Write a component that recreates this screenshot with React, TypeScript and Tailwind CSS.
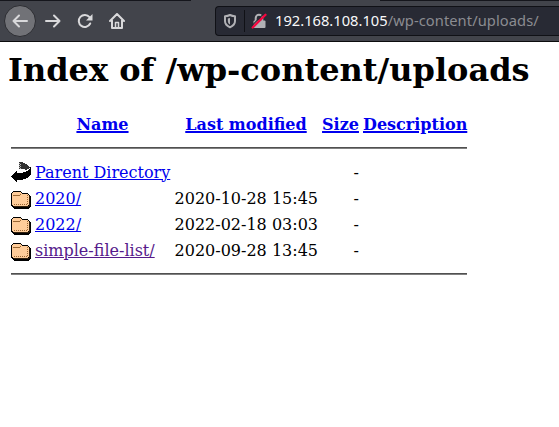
import React from "react";

type Entry = { name: string; modified: string; icon: "back" | "folder"; visited?: boolean };

const entries: Entry[] = [
  { name: "Parent Directory", modified: "", icon: "back" },
  { name: "2020/", modified: "2020-10-28 15:45", icon: "folder" },
  { name: "2022/", modified: "2022-02-18 03:03", icon: "folder" },
  { name: "simple-file-list/", modified: "2020-09-28 13:45", icon: "folder", visited: true },
];

function FolderIcon() {
  return (
    <svg width="20" height="22" viewBox="0 0 20 22" shapeRendering="crispEdges" className="block">
      <path d="M2 4h8v1h1v1h6v1h1v1h1v1h1v11h-1v1h-1v1H3v-1H2v-1H1v-1H0V6h1V5h1z" fill="#000" />
      <path d="M2 5h8v1h1v1h6v1h1v10h-1v1H2v-1H1V6h1z" fill="#ffcc99" />
      <path d="M2 8h7v1H2zM9 7h1v1H9z" fill="#996633" />
      <path d="M3 17h1v1H3zM5 17h1v1H5zM7 17h1v1H7zM9 17h1v1H9zM11 17h1v1h-1zM13 17h1v1h-1zM15 17h1v1h-1zM16 8h1v1h-1zM16 10h1v1h-1zM16 12h1v1h-1zM16 14h1v1h-1zM16 16h1v1h-1z" fill="#996633" />
      <path d="M18 9h1v10h-1v1H3v-1h15z" fill="#33200c" />
    </svg>
  );
}

function BackIcon() {
  return (
    <svg width="20" height="22" viewBox="0 0 20 22" shapeRendering="crispEdges" className="block">
      <path d="M8 1h4v1h2v1h2v1h1v1h1v1h1v1h-1v1h-2v1h-2V8H8z" fill="#333" />
      <path d="M8 2h1v1H8zM9 3h1v1H9zM8 4h1v1H8zM9 5h1v1H9zM8 6h1v1H8zM9 7h1v1H9z" fill="#bbb" />
      <path d="M19 6h1v8h-1v1h-1v1h-1v1h-2v1h-3v1H6v2H5v-1H4v-1H3v-1H2v-1H1v-1H0v-1h1v-1h1v-1h1v-1h1v-1h1v-1h1v2h6v-1h3v-1h2V9h1V8h1z" fill="#000" />
    </svg>
  );
}

function Toolbar() {
  return (
    <div className="relative flex h-[42px] items-center border-b border-[#0c0c0d] bg-[#42444b] text-[#d9d9db]">
      <div className="absolute left-0 top-0 h-px w-[191px] bg-[#15161c]" />
      <div className="absolute right-0 top-0 h-px w-[179px] bg-[#15161c]" />
      <div className="ml-1 flex h-8 w-8 shrink-0 items-center justify-center rounded-full border border-[#2c2d32] bg-[#717277]">
        <svg width="16" height="16" viewBox="0 0 16 16" fill="none" stroke="currentColor" strokeWidth="2" strokeLinecap="round" strokeLinejoin="round">
          <path d="M15 8H1.5M7 2.5L1.5 8L7 13.5" />
        </svg>
      </div>
      <svg className="ml-[9px] shrink-0" width="16" height="16" viewBox="0 0 16 16" fill="none" stroke="currentColor" strokeWidth="2" strokeLinecap="round" strokeLinejoin="round">
        <path d="M1 8h13.5M9 2.5L14.5 8L9 13.5" />
      </svg>
      <svg className="ml-4 shrink-0" width="16" height="16" viewBox="0 0 16 16" fill="none" stroke="currentColor" strokeWidth="2" strokeLinecap="round" strokeLinejoin="round">
        <path d="M13.2 10.5A6 6 0 1 1 12.5 4.2" />
        <path d="M15.500 1v6.500H9z" fill="currentColor" stroke="none" />
      </svg>
      <svg className="ml-4 shrink-0" width="16" height="16" viewBox="0 0 16 16" fill="none" stroke="currentColor" strokeWidth="2" strokeLinecap="round" strokeLinejoin="round">
        <path d="M1 8L8 1L15 8M3 7.500V15h10V7.500" />
        <path d="M6.500 15V9.500h3V15" strokeWidth="1.500" />
      </svg>
      <div className="ml-[90px] flex h-[30px] flex-1 items-center rounded-l border border-r-0 border-[#101116] bg-[#282a34]">
        <svg className="ml-[7px] shrink-0" width="14" height="16" viewBox="0 0 14 16" fill="none" stroke="#b1b1b5" strokeWidth="2" strokeLinejoin="round">
          <path d="M7 2C5 3 3.500 3.200 2 3.200V8c0 3.200 2 5 5 6.300C10 13 12 11.200 12 8V3.200C10.500 3.200 9 3 7 2z" />
          <path d="M7 5L4.800 5.500V8c0 1.600.7 2.700 2.200 3.600z" fill="#b1b1b5" stroke="none" />
        </svg>
        <div className="ml-[7px] h-[22px] w-px bg-[#101116]" />
        <svg className="ml-[6px] shrink-0" width="16" height="16" viewBox="0 0 16 16">
          <path d="M4.700 8V5a3.300 3.300 0 0 1 6.600 0v3" fill="none" stroke="#b1b1b5" strokeWidth="2" />
          <rect x="2.500" y="7.500" width="12" height="7.500" rx="1" fill="#b1b1b5" />
          <path d="M0 13.500L13 .500" stroke="#282a34" strokeWidth="1.200" />
          <path d="M1.700 14.500L14.500 1.700" stroke="#f5063f" strokeWidth="2.300" strokeLinecap="round" />
        </svg>
        <span className="-mt-px ml-2 whitespace-nowrap font-['Noto_Sans',sans-serif] text-[14.7px] leading-5 text-[#f9f9fa]">
          192.168.108.105<span className="tracking-[0.07px] text-[#8b8c91]">/wp-content/uploads/</span>
        </span>
      </div>
    </div>
  );
}

const rule = "my-2 h-[2px] border-0 border-t border-t-[#505050] bg-[#808080]";

export default function App() {
  return (
    <div className="h-[427px] w-[559px] overflow-hidden bg-white font-['DejaVu_Serif',serif] text-base leading-[19px] text-black">
      <Toolbar />
      <main className="px-2 pt-[9px]">
        <h1 className="whitespace-nowrap text-[32px] font-bold leading-[38px]">Index of /wp-content/uploads</h1>
        <table className="mt-[23px] w-[462px] table-fixed border-separate border-spacing-[2px] [&_td]:p-px [&_th]:px-px [&_th]:pt-px [&_th]:pb-[2px]">
          <colgroup>
            <col className="w-[22px]" />
            <col className="w-[137px]" />
            <col className="w-[146px]" />
            <col className="w-[39px]" />
            <col className="w-[106px]" />
          </colgroup>
          <tbody>
            <tr className="text-center font-bold text-[#0000ee]">
              <th />
              {["Name", "Last modified", "Size", "Description"].map((label) => (
                <th key={label} className="whitespace-nowrap">
                  <a className="underline decoration-2">{label}</a>
                </th>
              ))}
            </tr>
            <tr>
              <td colSpan={5}><hr className={rule} /></td>
            </tr>
            {entries.map((e) => (
              <tr key={e.name}>
                <td>{e.icon === "back" ? <BackIcon /> : <FolderIcon />}</td>
                <td className="whitespace-nowrap">
                  <a className={e.visited ? "text-[#551a8b] underline" : "text-[#0000ee] underline"}>{e.name}</a>
                </td>
                <td className="whitespace-nowrap text-right">{e.modified}</td>
                <td className="text-right">-</td>
                <td />
              </tr>
            ))}
            <tr>
              <td colSpan={5}><hr className={rule} /></td>
            </tr>
          </tbody>
        </table>
      </main>
    </div>
  );
}
